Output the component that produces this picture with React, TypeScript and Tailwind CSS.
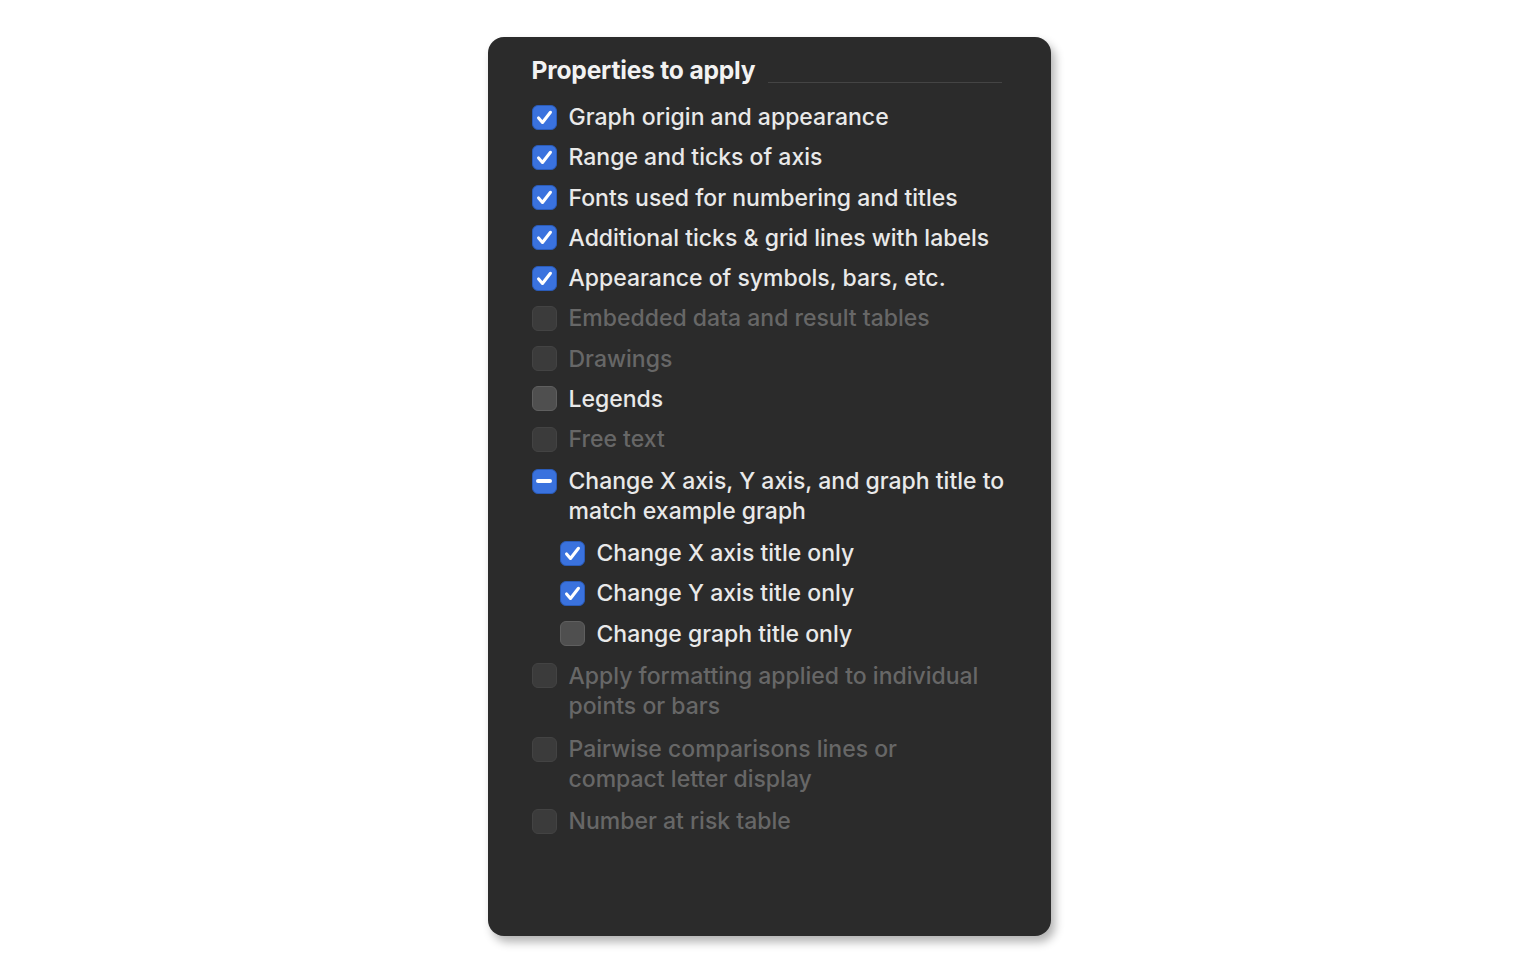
import React from "react";

type State = "checked" | "unchecked" | "mixed";

interface Item {
  label: React.ReactNode;
  key: string;
  state: State;
  disabled?: boolean;
  indent?: boolean;
  multi?: boolean;
}

const items: Item[] = [
  { key: "origin", label: "Graph origin and appearance", state: "checked" },
  { key: "range", label: "Range and ticks of axis", state: "checked" },
  { key: "fonts", label: "Fonts used for numbering and titles", state: "checked" },
  { key: "ticks", label: "Additional ticks & grid lines with labels", state: "checked" },
  { key: "symbols", label: "Appearance of symbols, bars, etc.", state: "checked" },
  { key: "embedded", label: "Embedded data and result tables", state: "unchecked", disabled: true },
  { key: "drawings", label: "Drawings", state: "unchecked", disabled: true },
  { key: "legends", label: "Legends", state: "unchecked" },
  { key: "free", label: "Free text", state: "unchecked", disabled: true },
  {
    key: "titles",
    label: (
      <>
        Change X axis, Y axis, and graph title to
        <br />
        match example graph
      </>
    ),
    state: "mixed",
    multi: true,
  },
  { key: "x", label: "Change X axis title only", state: "checked", indent: true },
  { key: "y", label: "Change Y axis title only", state: "checked", indent: true },
  { key: "g", label: "Change graph title only", state: "unchecked", indent: true },
  {
    key: "points",
    label: (
      <>
        Apply formatting applied to individual
        <br />
        points or bars
      </>
    ),
    state: "unchecked",
    disabled: true,
    multi: true,
  },
  {
    key: "pairwise",
    label: (
      <>
        Pairwise comparisons lines or
        <br />
        compact letter display
      </>
    ),
    state: "unchecked",
    disabled: true,
    multi: true,
  },
  { key: "risk", label: "Number at risk table", state: "unchecked", disabled: true },
];

function Box({ state, disabled }: { state: State; disabled?: boolean }) {
  if (state === "checked") {
    return (
      <div className="w-[25px] h-[25px] shrink-0 rounded-[6px] bg-[#3a72de] border border-[#2a5bb8] flex items-center justify-center">
        <svg width="19" height="19" viewBox="0 0 16 16" fill="none">
          <path d="M3 8.4 L6.3 12.2 L13 3.6" stroke="white" strokeWidth="2.6" strokeLinecap="round" strokeLinejoin="round" />
        </svg>
      </div>
    );
  }
  if (state === "mixed") {
    return (
      <div className="w-[25px] h-[25px] shrink-0 rounded-[6px] bg-[#3a72de] border border-[#2a5bb8] flex items-center justify-center">
        <div className="w-[16px] h-[4px] rounded-full bg-white" />
      </div>
    );
  }
  return (
    <div
      className={
        disabled
          ? "w-[25px] h-[25px] shrink-0 rounded-[6px] bg-[#3b3b3b] border border-[#434343]"
          : "w-[25px] h-[25px] shrink-0 rounded-[6px] bg-[#4f4f4f] border border-[#5f5f5f]"
      }
    />
  );
}

export default function App() {
  return (
    <div className="w-[1540px] h-[974px] bg-white flex justify-center pt-[37px] font-['Inter','Open_Sans',sans-serif]">
      <div className="ml-[-2px] w-[563px] h-[899px] rounded-[16px] bg-[#2b2b2b] shadow-[4px_6px_10px_rgba(0,0,0,0.3)] pl-[44px] pr-[49px] pt-[16px]">
        <div className="flex items-center gap-[13px] h-[34px]">
          <span className="text-[24.6px] font-bold text-[#f2f2f2] tracking-[-0.2px]">Properties to apply</span>
          <div className="flex-1 h-px bg-[#444444] mt-[24px]" />
        </div>
        <div className="mt-[15px] flex flex-col gap-[10.25px]">
          {items.map((it) => (
            <div
              key={it.key}
              className={
                (it.indent ? "flex gap-[12px] pl-[28px]" : "flex gap-[12px]") + (it.multi ? " py-[1.75px]" : "")
              }
            >
              <div className="h-[30px] flex items-center">
                <Box state={it.state} disabled={it.disabled} />
              </div>
              <span
                className={
                  it.disabled
                    ? "text-[23px] font-medium leading-[30px] text-[#676767] whitespace-nowrap"
                    : "text-[23px] font-medium leading-[30px] text-[#e9e9e9] whitespace-nowrap"
                }
              >
                {it.label}
              </span>
            </div>
          ))}
        </div>
      </div>
    </div>
  );
}
